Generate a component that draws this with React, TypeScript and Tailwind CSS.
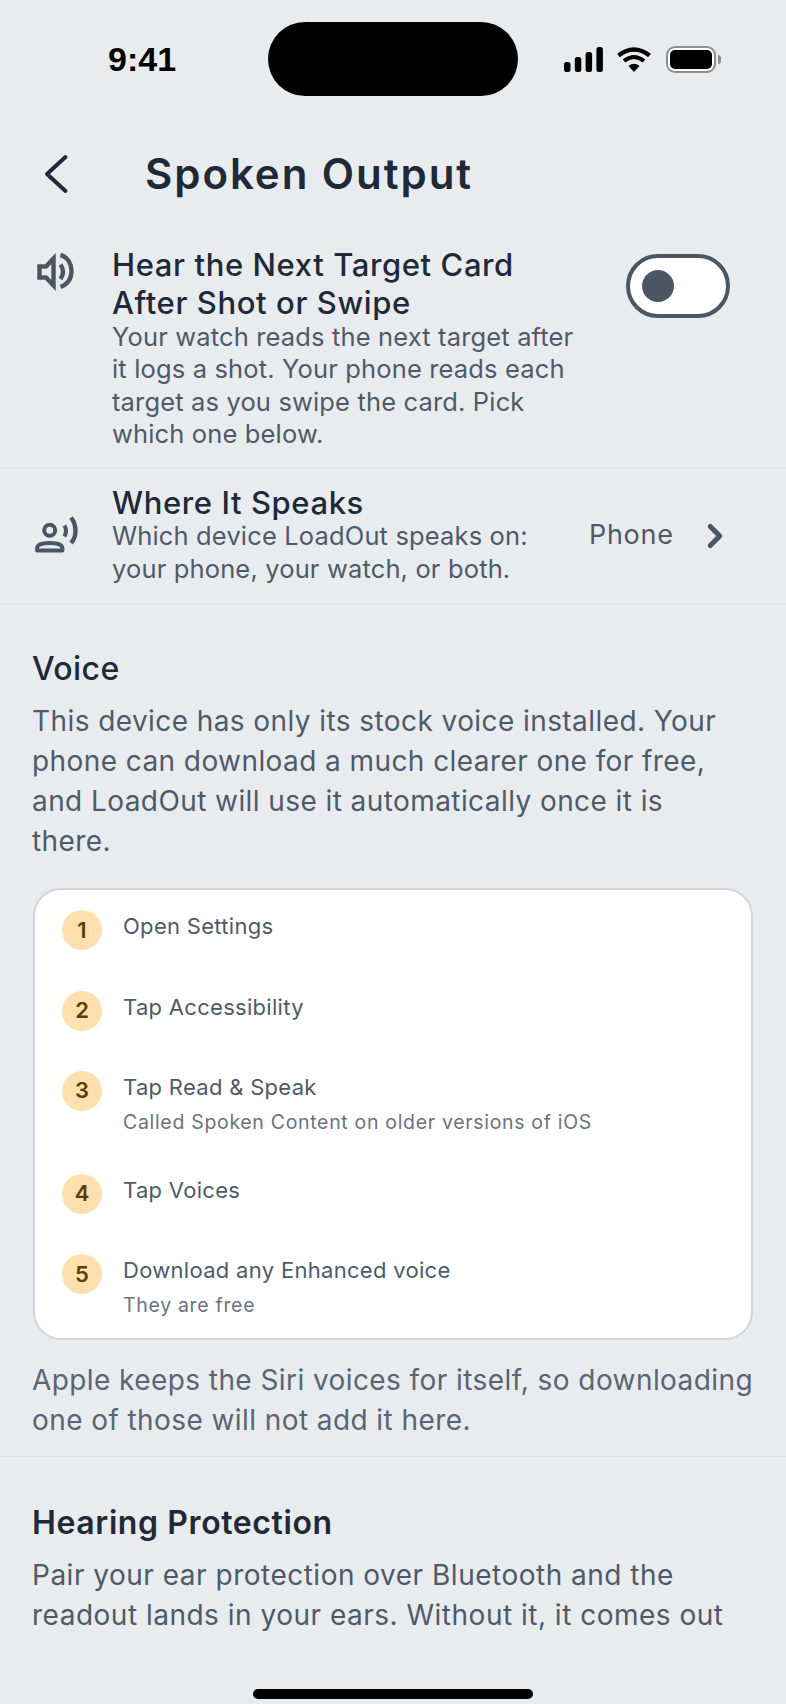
import { ChevronRight } from "lucide-react";

const steps = [
  { n: 1, title: "Open Settings" },
  { n: 2, title: "Tap Accessibility" },
  { n: 3, title: "Tap Read & Speak", note: "Called Spoken Content on older versions of iOS" },
  { n: 4, title: "Tap Voices" },
  { n: 5, title: "Download any Enhanced voice", note: "They are free" },
];

const StatusBar = () => (
  <div className="flex h-[96px] items-center pt-[22px] pl-[108px]">
    <span className="w-[160px] font-['Liberation_Sans'] text-[34px] leading-none font-bold text-black">9:41</span>
    <div className="h-[74px] w-[250px] rounded-full bg-black" />
    <div className="ml-[46px] flex items-center gap-[14px]">
      <svg width="39" height="25" viewBox="0 0 39 25" fill="black">
        <rect x="0" y="15" width="6.500" height="10" rx="2.500" />
        <rect x="10.800" y="10" width="6.500" height="15" rx="2.500" />
        <rect x="21.600" y="5" width="6.500" height="20" rx="2.500" />
        <rect x="32.400" y="0" width="6.500" height="25" rx="2.500" />
      </svg>
      <svg width="34" height="25" viewBox="0 0 34 25" fill="none" stroke="black">
        <path d="M1.500 8.500 Q17 -3.500 32.500 8.500" strokeWidth="4.500" />
        <path d="M7 14 Q17 6 27 14" strokeWidth="4" />
        <path d="M11.500 19 Q17 14.500 22.500 19 L17 25 Z" fill="black" stroke="none" />
      </svg>
      <div className="ml-[1px] flex items-center gap-[2px]">
        <div className="h-[27px] w-[50px] rounded-[9px] border-2 border-[#8e8e8e] bg-white p-[2px]">
          <div className="h-full w-full rounded-[5px] bg-black" />
        </div>
        <div className="h-[9px] w-[3px] rounded-r-full bg-[#8e8e8e]" />
      </div>
    </div>
  </div>
);

const App = () => {
  return (
    <div className="relative h-[1704px] w-[786px] overflow-hidden bg-[#e8ecef] font-['Inter',sans-serif]">
      <StatusBar />

      <div className="flex h-[130px] items-center pl-[44px] pt-[26px]">
        <svg width="25" height="40" viewBox="0 0 25 40" fill="none" stroke="#1f2937" strokeWidth="4" strokeLinecap="round" strokeLinejoin="round" className="mr-[76px]">
          <path d="M21.500 3 L3 20 L21.500 37" />
        </svg>
        <h1 className="text-[42px] leading-none font-semibold tracking-[1.95px] text-[#1f2937]">Spoken Output</h1>
      </div>

      <div className="flex border-b border-[#dfe3e8] pt-[20px] pb-[17px]">
        <div className="w-[112px] shrink-0 pl-[30px]">
          <svg width="55" height="50" viewBox="0 0 55 50" fill="none" stroke="#4b5563">
            <path d="M9.500 20.500 H16 L23.500 12.500 V39.500 L16 31.500 H9.500 Z" strokeWidth="4.400" strokeLinejoin="miter" />
            <path d="M30.500 18.500 Q35.500 25.500 30.500 33" strokeWidth="4.400" />
            <path d="M30.500 9 C38 11 41.500 18 41.500 25 C41.500 32 38 38 30.500 41" strokeWidth="4.400" />
          </svg>
        </div>
        <div className="w-[477px]">
          <p className="w-[430px] text-[31px] leading-[38px] font-medium tracking-[0.6px] text-[#1f2937]">
            Hear the Next Target Card After Shot or Swipe
          </p>
          <p className="-mt-[1px] text-[25.500px] leading-[32.300px] tracking-[0.15px] text-[#4f5a69]">
            Your watch reads the next target after it logs a shot. Your phone reads each target as you swipe the card. Pick which one below.
          </p>
        </div>
        <div className="mt-[8px] ml-[37px] flex h-[64px] w-[104px] shrink-0 items-center rounded-full border-[4px] border-[#4b5563] bg-white pl-[12px]">
          <div className="size-[32px] rounded-full bg-[#4b5563]" />
        </div>
      </div>

      <div className="flex h-[136px] items-center border-b border-[#dfe3e8]">
        <div className="w-[112px] shrink-0 pl-[28px]">
          <svg width="55" height="50" viewBox="0 0 55 50" fill="none" stroke="#4b5563">
            <circle cx="21.700" cy="19.300" r="5.500" strokeWidth="4" />
            <path d="M9 39.500 V37.500 Q9 32 21.700 32 Q34.500 32 34.500 37.500 V39.500 Z" strokeWidth="3.800" strokeLinejoin="round" />
            <path d="M36.500 14.500 Q39.500 20 36.500 25.500" strokeWidth="4" />
            <path d="M43 6.500 C49 14 49 26 43 32" strokeWidth="4.400" />
          </svg>
        </div>
        <div className="w-[477px]">
          <p className="text-[31px] leading-[33px] font-medium tracking-[0.6px] text-[#1f2937]">Where It Speaks</p>
          <p className="text-[25.500px] leading-[33px] tracking-[0.15px] text-[#4f5a69]">
            Which device LoadOut speaks on: your phone, your watch, or both.
          </p>
        </div>
        <span className="absolute left-[589px] text-[27px] tracking-[0.7px] text-[#4f5a69]">Phone</span>
        <ChevronRight size={38} strokeWidth={3.200} className="absolute left-[696px] text-[#4b5563]" />
      </div>

      <div className="border-b border-[#dfe3e8] pl-[32px] pt-[45px] pb-[16px]">
        <h2 className="text-[32px] leading-[40px] font-medium tracking-[0.4px] text-[#1f2937]">Voice</h2>
        <p className="mt-[12px] w-[713px] text-[28px] leading-[40px] tracking-[0.42px] text-[#4f5a69]">
          This device has only its stock voice installed. Your phone can download a much clearer one for free, and LoadOut will use it automatically once it is there.
        </p>

        <div className="mt-[27px] ml-[1px] flex h-[452px] w-[720px] flex-col rounded-[28px] border-2 border-[#d1d5db] bg-white pl-[27px] pt-[20px]">
          {steps.map((s) => (
            <div key={s.n} className="flex shrink-0 gap-[21px]" style={{ height: s.note ? 103 : 80.400 }}>
              <div className="flex size-[40px] shrink-0 items-center justify-center rounded-full bg-[#fde0ad] text-[22px] font-semibold text-[#5c3d0a]">
                {s.n}
              </div>
              <div className="pt-[1px]">
                <p className="text-[22px] leading-[30px] tracking-[0.3px] text-[#4f5a69]">{s.title}</p>
                {s.note && <p className="mt-[6px] text-[19.500px] leading-[28px] tracking-[0.68px] text-[#6b7280]">{s.note}</p>}
              </div>
            </div>
          ))}
        </div>

        <p className="mt-[20px] w-[733px] text-[28px] leading-[40px] tracking-[0.42px] text-[#5a6474]">
          Apple keeps the Siri voices for itself, so downloading one of those will not add it here.
        </p>
      </div>

      <div className="px-[32px] pt-[46px]">
        <h2 className="text-[32px] leading-[40px] font-semibold tracking-[0.6px] text-[#1f2937]">Hearing Protection</h2>
        <p className="mt-[12px] text-[28px] leading-[40px] tracking-[0.5px] text-[#4f5a69]">
          Pair your ear protection over Bluetooth and the readout lands in your ears. Without it, it comes out
        </p>
      </div>

      <div className="absolute bottom-[0px] left-0 flex h-[40px] w-full justify-center bg-[#e8ecef] pt-[25px]">
        <div className="h-[10px] w-[280px] rounded-full bg-black" />
      </div>
    </div>
  );
};

export default App;
